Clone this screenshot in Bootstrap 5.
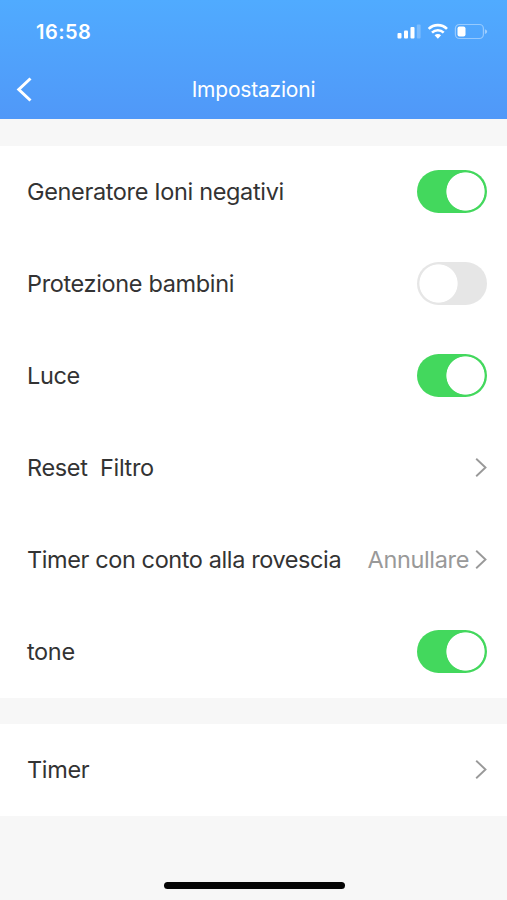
<!DOCTYPE html>
<html lang="it">
<head>
<meta charset="utf-8">
<meta name="viewport" content="width=device-width, initial-scale=1">
<title>Impostazioni</title>
<link href="https://cdn.jsdelivr.net/npm/bootstrap@5.3.0/dist/css/bootstrap.min.css" rel="stylesheet">
<style>
body { font-family: Inter, "Liberation Sans", sans-serif; background: #f7f7f7; color: #333; height: 900px; overflow: hidden; }
.app-header { height: 119px; background: linear-gradient(#50abff, #5098f8); margin-bottom: 27px; }
.status-bar { height: 60px; padding: 4px 18px 0 36px; }
.clock { font-size: 20px; font-weight: 600; letter-spacing: .45px; line-height: 1; }
.title-bar { height: 59px; padding: 0 16px; }
.title-bar h1 { font-size: 21px; font-weight: 400; letter-spacing: -.2px; line-height: 1; }
.settings { margin-bottom: 26px; --bs-list-group-color: #333; }
.setting { height: 92px; padding: 0 20px 0 27px; font-size: 23.5px; line-height: 1; white-space: pre; }
.fit-a { letter-spacing: -.35px; }
.fit-b { letter-spacing: -.4px; }
.form-switch .form-check-input.toggle { width: 70px; height: 43px; margin: 0; float: none; border: 0; border-radius: 22px; opacity: 1;
  background: radial-gradient(circle closest-side, #fff 96%, #fff0) 2px center / 39px 39px no-repeat #e6e6e6; }
.form-switch .form-check-input.toggle:checked { background-color: #43d85d; background-position: 29px center; }
.setting .form-switch { padding-bottom: 2px !important; }
.choice { color: #999; margin-right: 6px; letter-spacing: -.35px; }
.home-bar { width: 181px; height: 7px; background: #050505; margin: 0 0 11px 164px; }
</style>
</head>
<body class="d-flex flex-column">
<header class="app-header text-white flex-shrink-0">
  <div class="status-bar d-flex align-items-center justify-content-between">
    <span class="clock">16:58</span>
    <svg width="93" height="18" viewBox="0 0 93 18" fill="#fff">
      <rect x="1.5" y="10" width="4" height="5.500" rx="1"/><rect x="8" y="7.500" width="4" height="8" rx="1"/><rect x="14.500" y="4" width="4" height="11.500" rx="1"/><rect x="20.800" y="1.500" width="3.800" height="14" rx="1" opacity=".25"/>
      <g fill="none" stroke="#fff" stroke-width="2.600"><path d="M32.700 5.900a13 13 0 0 1 18.300 0"/><path d="M36 9.600a8.400 8.400 0 0 1 11.700 0"/></g>
      <path d="M38.600 12.200a4.700 4.700 0 0 1 6.500 0L41.850 15.700z"/>
      <rect x="59.400" y="1.500" width="28" height="14" rx="4" fill="none" stroke="#fff" stroke-opacity=".4" stroke-width="1.200"/>
      <rect x="61.500" y="3.400" width="8" height="10.200" rx="2"/><path d="M88.900 6.200c3 .8 3 3.900 0 4.700z" opacity=".45"/>
    </svg>
  </div>
  <div class="title-bar d-flex align-items-center">
    <svg width="16" height="26" viewBox="0 0 16 26" fill="none" stroke="#fff" stroke-width="3"><path d="M14.500 1.500L2.800 12.500l11.700 11"/></svg>
    <h1 class="flex-grow-1 text-center mb-0 pe-3">Impostazioni</h1>
  </div>
</header>
<main class="flex-grow-1">
  <div class="list-group list-group-flush settings">
    <div class="list-group-item setting border-0 d-flex align-items-center justify-content-between"><span class="fit-a">Generatore Ioni negativi</span><span class="form-check form-switch p-0 m-0 d-flex"><input class="form-check-input toggle" type="checkbox" role="switch" checked></span></div>
    <div class="list-group-item setting border-0 d-flex align-items-center justify-content-between"><span class="fit-a">Protezione bambini</span><span class="form-check form-switch p-0 m-0 d-flex"><input class="form-check-input toggle" type="checkbox" role="switch"></span></div>
    <div class="list-group-item setting border-0 d-flex align-items-center justify-content-between"><span class="fit-a">Luce</span><span class="form-check form-switch p-0 m-0 d-flex"><input class="form-check-input toggle" type="checkbox" role="switch" checked></span></div>
    <div class="list-group-item setting border-0 d-flex align-items-center justify-content-between"><span class="fit-a">Reset  Filtro</span><svg width="12" height="20" viewBox="0 0 12 20" fill="none" stroke="#999" stroke-width="1.900"><path d="M1.200 .7L10.500 9.500l-9.300 8.800"/></svg></div>
    <div class="list-group-item setting border-0 d-flex align-items-center"><span class="fit-b">Timer con conto alla rovescia</span><span class="choice ms-auto">Annullare</span><svg width="12" height="20" viewBox="0 0 12 20" fill="none" stroke="#999" stroke-width="1.900"><path d="M1.200 .7L10.500 9.500l-9.300 8.800"/></svg></div>
    <div class="list-group-item setting border-0 d-flex align-items-center justify-content-between"><span class="fit-a">tone</span><span class="form-check form-switch p-0 m-0 d-flex"><input class="form-check-input toggle" type="checkbox" role="switch" checked></span></div>
  </div>
  <div class="list-group list-group-flush settings">
    <div class="list-group-item setting border-0 d-flex align-items-center justify-content-between"><span class="fit-a">Timer</span><svg width="12" height="20" viewBox="0 0 12 20" fill="none" stroke="#999" stroke-width="1.900"><path d="M1.200 .7L10.500 9.500l-9.300 8.800"/></svg></div>
  </div>
</main>
<div class="home-bar rounded-pill flex-shrink-0"></div>
<script src="https://cdn.jsdelivr.net/npm/bootstrap@5.3.0/dist/js/bootstrap.bundle.min.js"></script>
</body>
</html>
